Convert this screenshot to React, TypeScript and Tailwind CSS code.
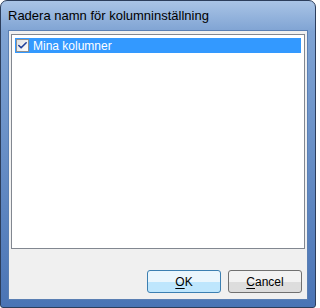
import { Check } from 'lucide-react'

// Windows 7 style button
function DialogButton({ hotkey, rest, focused }: { hotkey: string; rest: string; focused?: boolean }) {
  return (
    <button
      className={
        focused
          ? 'flex h-[23px] w-[74px] items-center justify-center rounded-[3px] border border-[#3c7fb1] bg-gradient-to-b from-[#eaf6fd] from-50% to-[#bee6fd] to-50% text-[12px] text-black'
          : 'flex h-[23px] w-[74px] items-center justify-center rounded-[3px] border border-[#707070] bg-gradient-to-b from-[#f2f2f2] from-50% to-[#dddddd] to-50% text-[12px] text-black'
      }
    >
      <span className="underline underline-offset-2">{hotkey}</span>
      {rest}
    </button>
  )
}

export default function App() {
  return (
    <div className="h-[308px] w-[316px] font-['Liberation_Sans',Arial,sans-serif]">
      <div className="flex h-full w-full flex-col rounded-t-[7px] rounded-b-[3px] border border-[#2c3e5c] bg-gradient-to-b from-[#a9c4e6] via-[#7fa3d3] via-10% to-[#4a74b5]">
        {/* title bar */}
        <div className="flex h-[29px] shrink-0 items-center pl-[7px] text-[13px] text-black">
          Radera namn för kolumninställning
        </div>

        {/* client area */}
        <div className="mx-[7px] mb-[7px] flex flex-1 flex-col border border-[#5a7fb3] bg-[#f0f0f0]">
          <div className="mx-[2px] mt-[3px] h-[215px] border border-[#828790] bg-white p-[3px]">
            <div className="flex h-[15px] items-center bg-[#3399ff]">
              <div className="ml-[1px] mr-[4px] flex h-[13px] w-[13px] items-center justify-center border border-[#8f8f8f] bg-gradient-to-br from-[#e0e0e0] to-[#ffffff]">
                <Check className="h-[11px] w-[11px] text-[#21409a]" strokeWidth={3.5} />
              </div>
              <span className="text-[12px] leading-none text-white">Mina kolumner</span>
            </div>
          </div>

          <div className="mt-auto mb-[6px] flex justify-end gap-[7px] pr-[5px]">
            <DialogButton hotkey="O" rest="K" focused />
            <DialogButton hotkey="C" rest="ancel" />
          </div>
        </div>
      </div>
    </div>
  )
}
